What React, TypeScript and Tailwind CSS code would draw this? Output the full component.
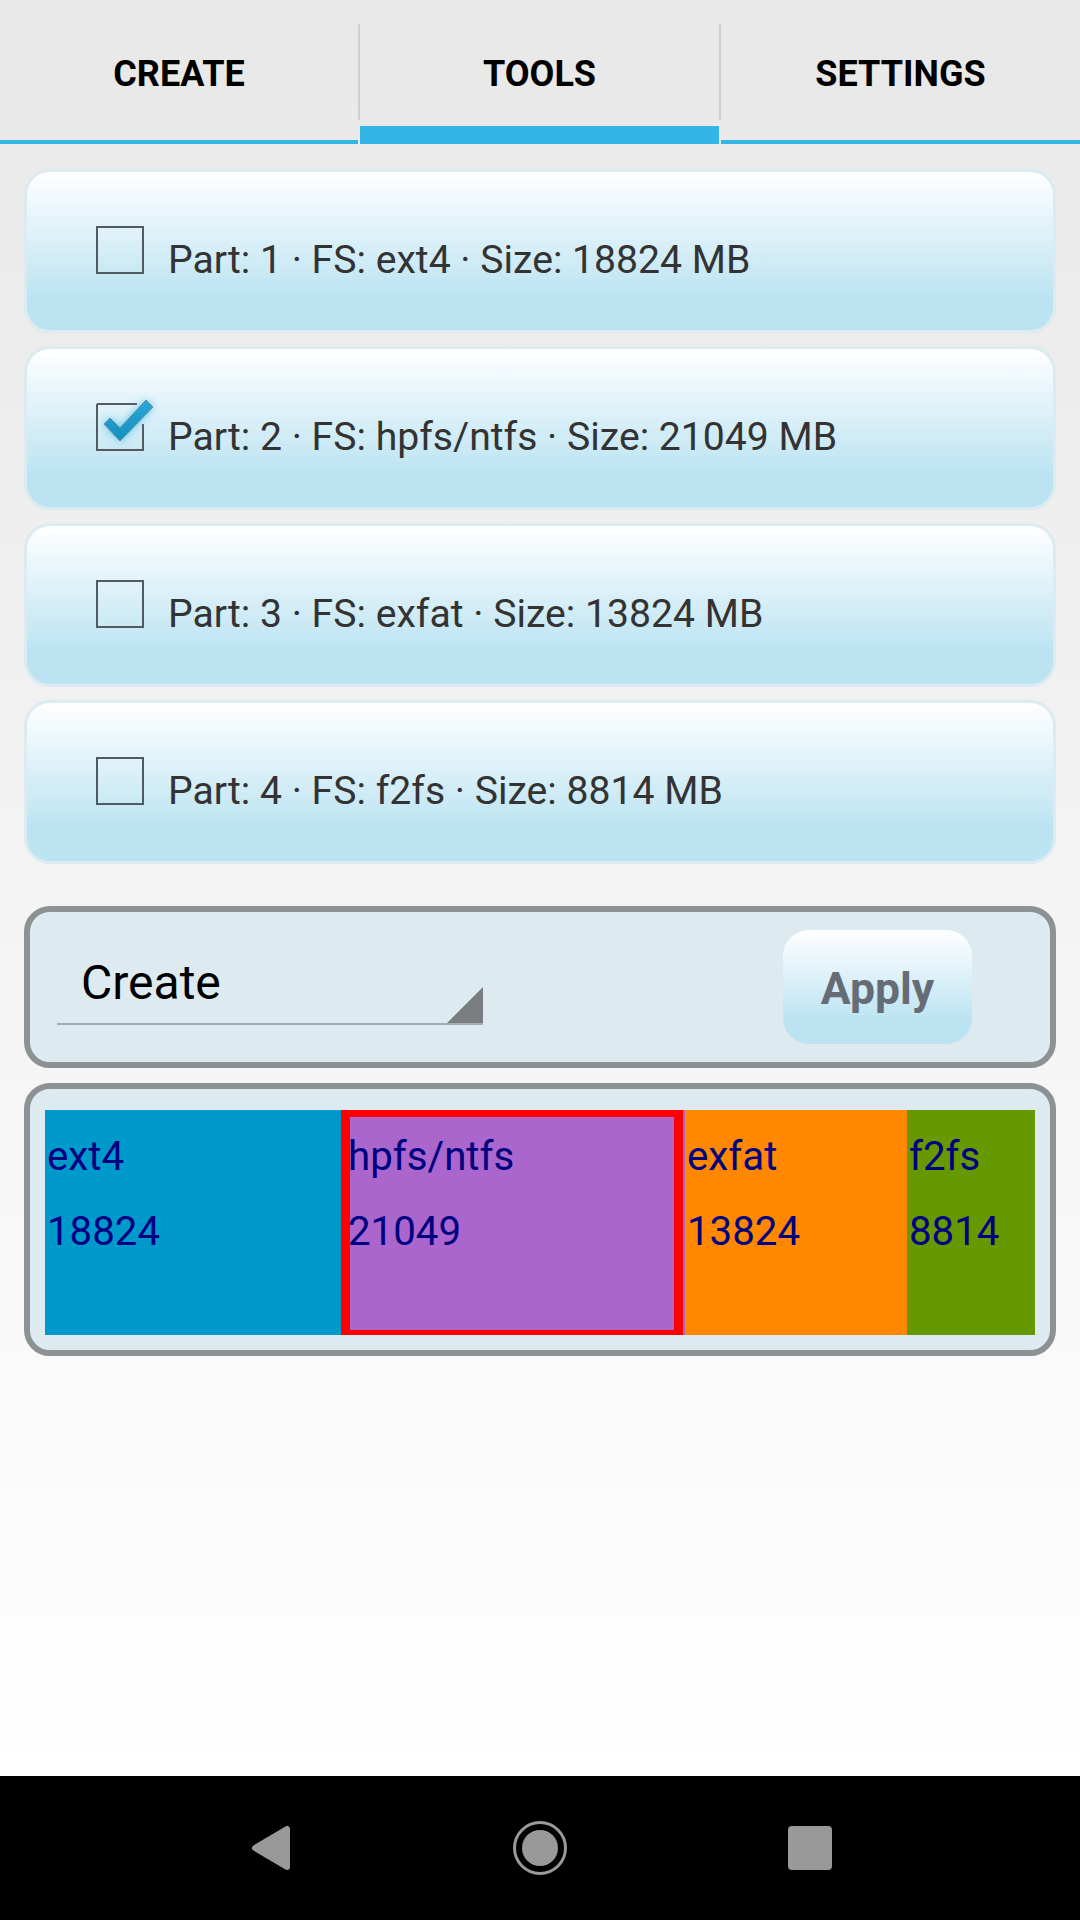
import React from "react";

const font = { fontFamily: "Roboto, sans-serif" };

function CheckBox({ checked }: { checked: boolean }) {
  return (
    <svg width="60" height="52" viewBox="0 0 60 52" className="shrink-0 overflow-visible">
      <defs>
        <filter id="glow" x="-50%" y="-50%" width="200%" height="200%">
          <feGaussianBlur stdDeviation="4" />
        </filter>
        <linearGradient id="tick" x1="0" y1="0" x2="0" y2="1">
          <stop offset="0" stopColor="#2aa6d8" />
          <stop offset="1" stopColor="#1390c2" />
        </linearGradient>
      </defs>
      {checked ? (
        <>
          <path d="M1 1H41M47 21V47H1V1" fill="none" stroke="#555c61" strokeWidth="2" />
          <path d="M8 21L14 15L24 25L50 -3L57 4L24 38Z" fill="#33b5e5" opacity="0.8" filter="url(#glow)" />
          <path d="M8 21L14 15L24 25L50 -3L57 4L24 38Z" fill="url(#tick)" stroke="#6a8d9c" strokeWidth="1" strokeLinejoin="round" />
        </>
      ) : (
        <rect x="1" y="1" width="46" height="46" fill="none" stroke="#4f5a61" strokeWidth="2" />
      )}
    </svg>
  );
}

function PartCard({ label, checked, last }: { label: string; checked?: boolean; last?: boolean }) {
  return (
    <div
      className={`h-[164px] rounded-[26px] border-[3px] border-[#dcebf1] bg-gradient-to-b from-[#ffffff] to-[#bbe3f2] to-80% pl-[69px] pt-[54px] flex items-start ${
        last ? "" : "mb-[13px]"
      }`}
    >
      <CheckBox checked={!!checked} />
      <span className="text-[39.15px] leading-[44px] text-[#333333] whitespace-pre mt-[12px] ml-[12px]">{label}</span>
    </div>
  );
}

function Tab({ label, width }: { label: string; width: "left" | "active" | "right" }) {
  const size =
    width === "active"
      ? "w-[359px] border-b-[18px]"
      : width === "left"
        ? "w-[358px] border-b-[4px]"
        : "flex-1 border-b-[4px]";
  return (
    <div className={`h-[144px] flex items-start justify-center pt-[53px] border-[#33b5e5] ${size}`}>
      <span className="text-[36px] leading-[42px] font-bold text-black">{label}</span>
    </div>
  );
}

function Divider() {
  return (
    <div className="w-[2px] h-[144px] pt-[24px] shrink-0">
      <div className="h-[96px] bg-[#cfcfcf]" />
    </div>
  );
}

function BlockText({ a, b }: { a: string; b: string }) {
  return (
    <>
      <div>{a}</div>
      <div>{b}</div>
    </>
  );
}

export default function App() {
  return (
    <div
      style={font}
      className="w-[1080px] h-[1920px] flex flex-col overflow-hidden bg-gradient-to-b from-[#e8e8e8] to-[#ffffff] to-[92.5%]"
    >
      <div className="flex h-[144px] shrink-0">
        <Tab label="CREATE" width="left" />
        <Divider />
        <Tab label="TOOLS" width="active" />
        <Divider />
        <Tab label="SETTINGS" width="right" />
      </div>

      <div className="flex-1 px-[24px] pt-[25px]">
        <PartCard label="Part: 1 · FS: ext4 · Size: 18824 MB" />
        <PartCard label="Part: 2 · FS: hpfs/ntfs · Size: 21049 MB" checked />
        <PartCard label="Part: 3 · FS: exfat · Size: 13824 MB" />
        <PartCard label="Part: 4 · FS: f2fs · Size: 8814 MB" last />

        <div className="mt-[42px] h-[162px] rounded-[26px] border-[6px] border-[#8c9194] bg-[#ddeaf0] flex items-start pl-[27px] pt-[18px]">
          <div className="relative w-[426px] h-[95px] border-b-[2px] border-[#a4adb1] pl-[24px] pt-[25px]">
            <span className="text-[48px] leading-[56px] text-black">Create</span>
            <svg width="36" height="36" viewBox="0 0 36 36" className="absolute right-0 bottom-0">
              <path d="M36 0V36H0Z" fill="#7a7e81" />
            </svg>
          </div>
          <button className="ml-[300px] w-[189px] h-[114px] pt-[4px] rounded-[26px] bg-gradient-to-b from-[#ffffff] to-[#bbe3f2] to-80% text-[44.5px] font-bold text-[#666c75] flex items-center justify-center">
            Apply
          </button>
        </div>

        <div className="mt-[15px] h-[273px] rounded-[26px] border-[6px] border-[#8c9194] bg-[#ddeaf0] px-[15px] pt-[21px]">
          <div className="flex h-[225px] text-[40.25px] leading-[75px] text-[#000080]">
            <div className="w-[296px] bg-[#0099cc] pl-[2px] pt-[9px]">
              <BlockText a="ext4" b="18824" />
            </div>
            <div className="w-[344px] bg-[#aa66cc] pr-[2px]">
              <div className="h-full border-x-[9px] border-t-[7px] border-b-[5px] border-[#ff0000] pt-[2px] indent-[-2px]">
                <BlockText a="hpfs/ntfs" b="21049" />
              </div>
            </div>
            <div className="w-[222px] bg-[#ff8800] pl-[2px] pt-[9px]">
              <BlockText a="exfat" b="13824" />
            </div>
            <div className="w-[128px] bg-[#669900] pl-[2px] pt-[9px]">
              <BlockText a="f2fs" b="8814" />
            </div>
          </div>
        </div>
      </div>

      <div className="h-[144px] shrink-0 bg-black flex items-center pl-[249px]">
        <svg width="44" height="48" viewBox="0 0 44 48" className="shrink-0">
          <path d="M38 5V43L6 24Z" fill="#999999" stroke="#999999" strokeWidth="6" strokeLinejoin="round" />
        </svg>
        <svg width="60" height="60" viewBox="0 0 60 60" className="shrink-0 ml-[217px]">
          <circle cx="30" cy="30" r="25.5" fill="none" stroke="#999999" strokeWidth="3" />
          <circle cx="30" cy="30" r="18" fill="#999999" />
        </svg>
        <div className="w-[44px] h-[44px] ml-[218px] rounded-[4px] bg-[#999999]" />
      </div>
    </div>
  );
}
